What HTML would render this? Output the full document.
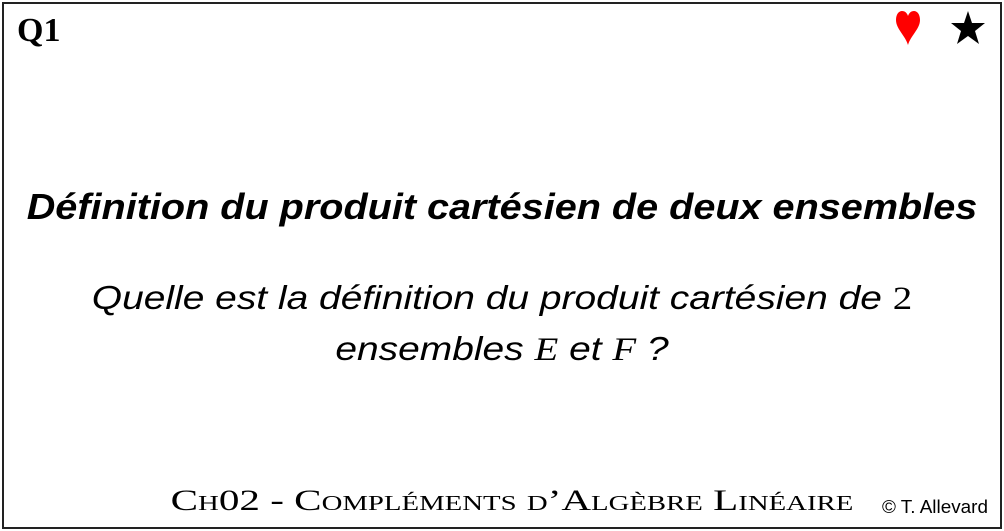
<!DOCTYPE html>
<html><head><meta charset="utf-8"><style>
body{margin:0;width:1004px;height:531px;background:#fff;position:relative;overflow:hidden}
.frame{position:absolute;left:2px;top:2px;width:996px;height:523px;border:2px solid #222}
.q{position:absolute;left:17px;top:12px;font:bold 34px "Liberation Serif",serif}
.t{position:absolute;left:0;width:1004px;top:186px;text-align:center;font:italic bold 36px "Liberation Sans",sans-serif;white-space:nowrap;transform:scaleX(1.1)}
.b{position:absolute;left:0;width:1004px;top:273px;text-align:center;font:italic 33px/50px "Liberation Sans",sans-serif;transform:scaleX(1.18)}
.m{font-family:"Liberation Serif",serif}
.f{position:absolute;right:151px;top:484px;font:30px "Liberation Serif",serif;font-variant:small-caps;white-space:nowrap;transform:scaleX(1.37);transform-origin:right}
.c{position:absolute;right:16px;top:497px;font:18px "Liberation Sans",sans-serif;white-space:nowrap;transform:scaleX(1.05);transform-origin:right}
</style></head><body>
<div class="frame"></div>
<div class="q">Q1</div>
<svg style="position:absolute;left:890px;top:9px" width="36" height="38" viewBox="0 0 36 38"><path d="M18 36 C15 26 6 20 6 11 C6 5 9 2 12 2 C15 2 17 4 18 7 C19 4 21 2 24 2 C27 2 30 5 30 11 C30 20 21 26 18 36Z" fill="#f00"/></svg>
<svg style="position:absolute;left:950px;top:10px" width="36" height="36" viewBox="0 0 36 36"><path d="M18 1 L22 13 L35 13 L25 21 L29 34 L18 26 L7 34 L11 21 L1 13 L14 13Z" fill="#000"/></svg>
<div class="t">Définition du produit cartésien de deux ensembles</div>
<div class="b">Quelle est la définition du produit cartésien de <span class="m" style="font-style:normal">2</span><br>ensembles <span class="m">E</span> et <span class="m">F</span> ?</div>
<div class="f">Ch02 - Compléments d’Algèbre Linéaire</div>
<div class="c">© T. Allevard</div>
</body></html>
